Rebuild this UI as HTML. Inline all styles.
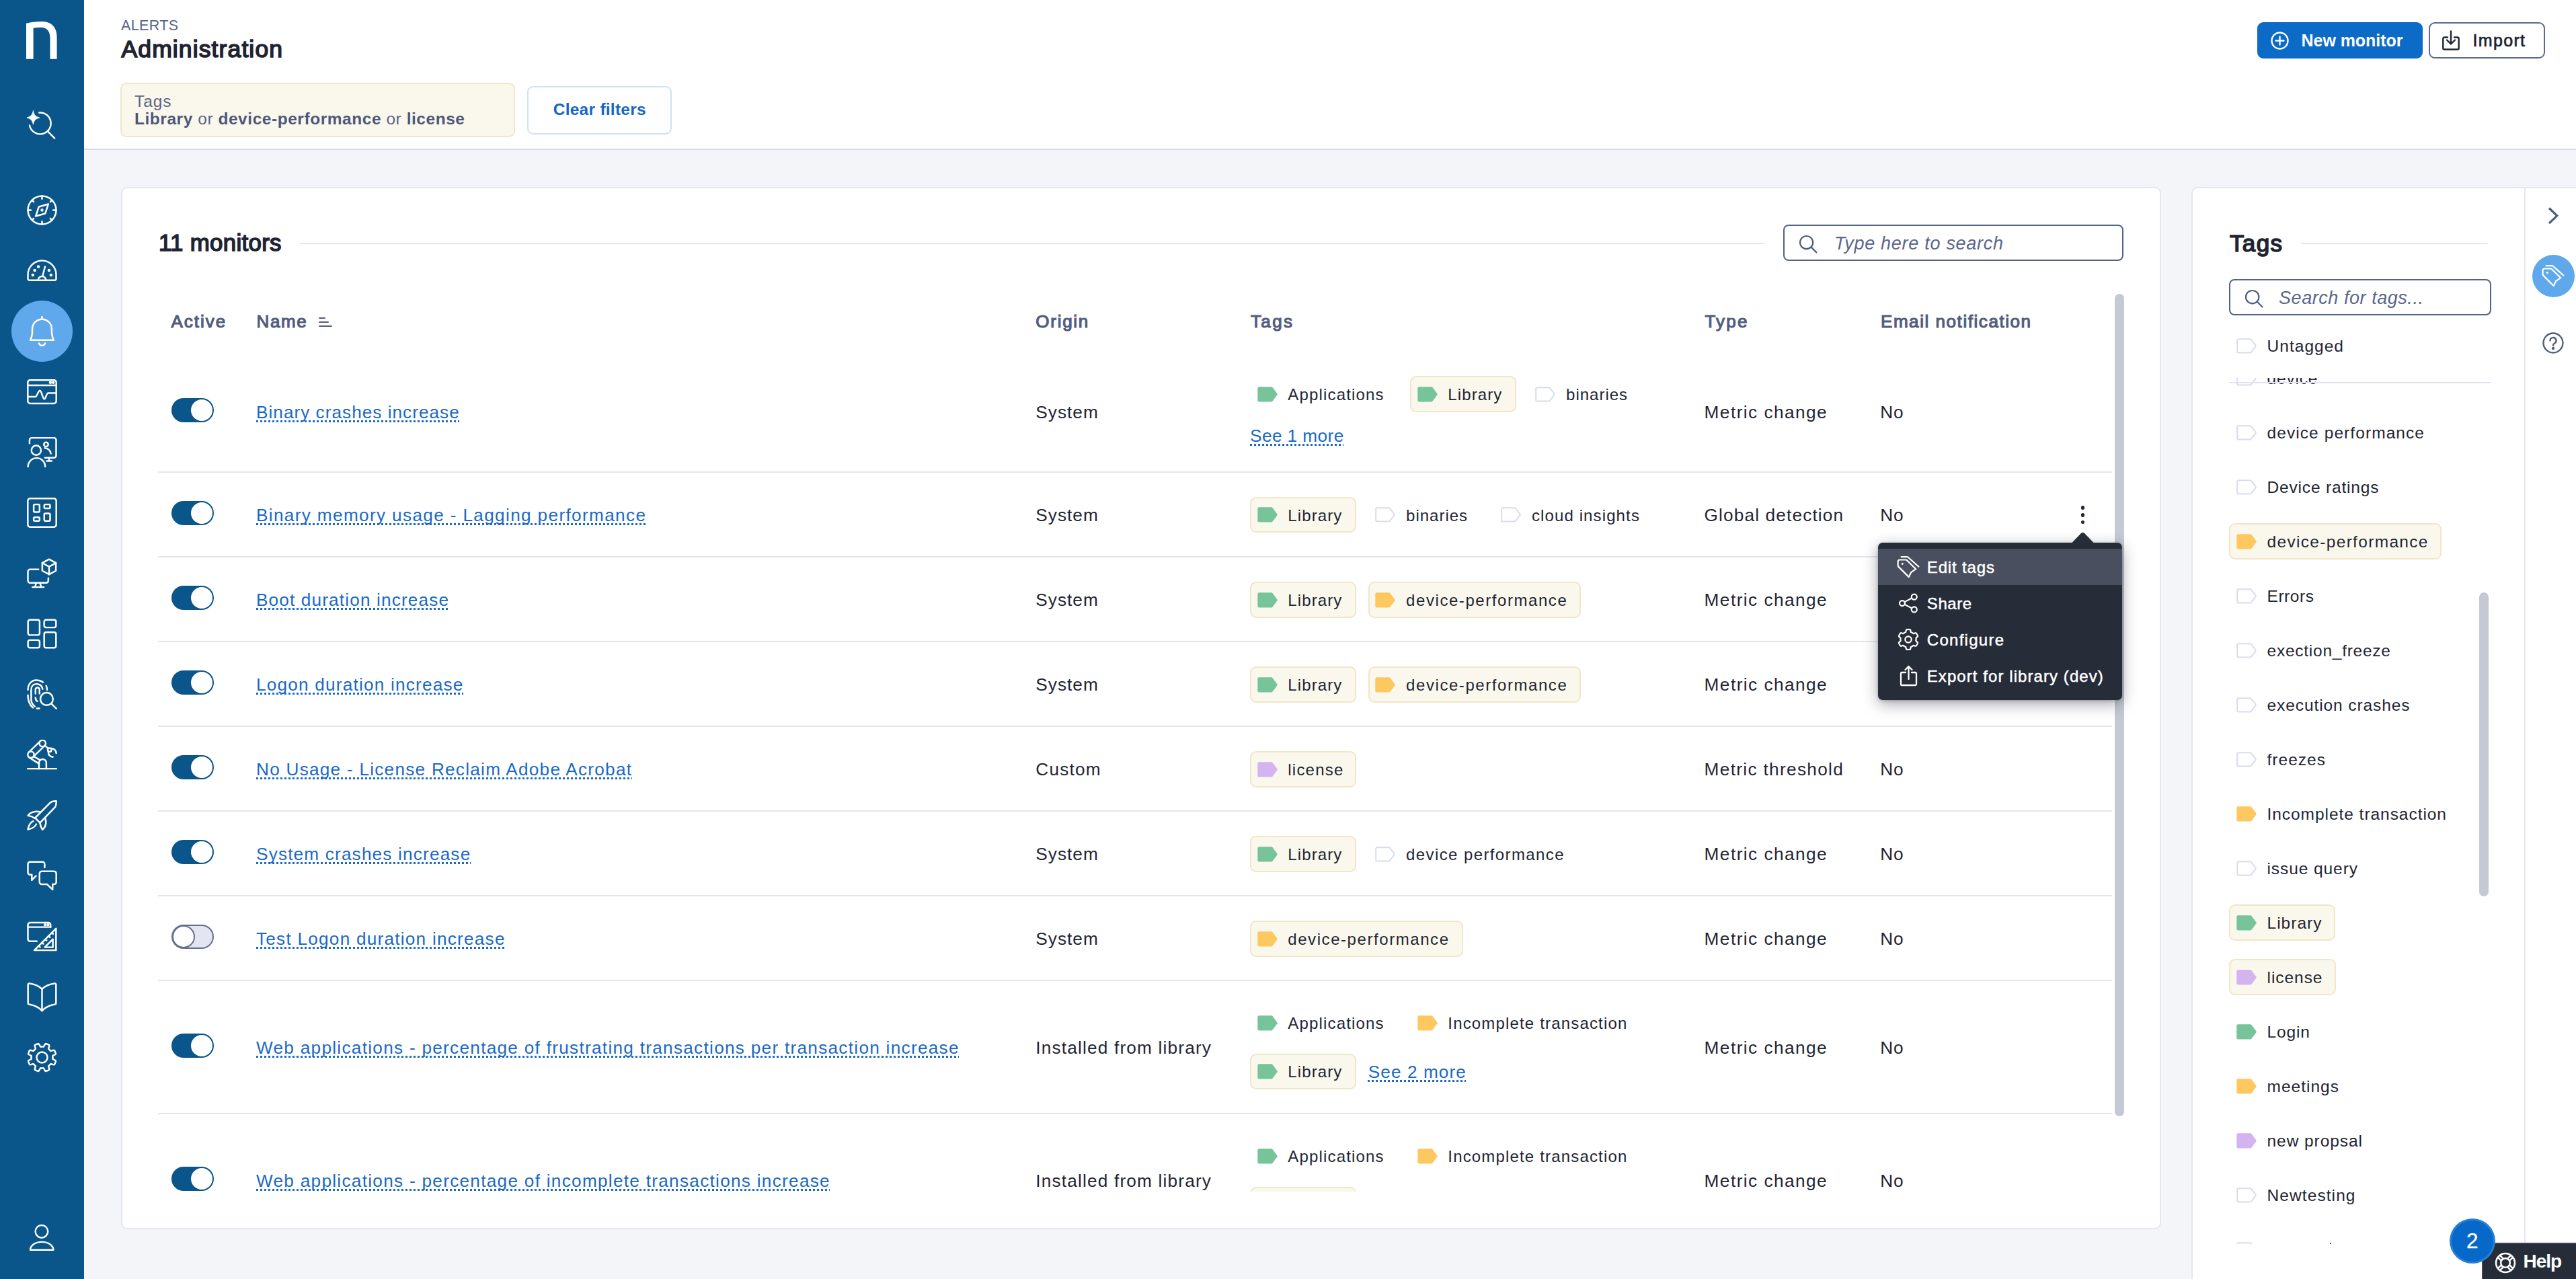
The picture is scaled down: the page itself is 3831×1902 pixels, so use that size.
<!DOCTYPE html>
<html><head><meta charset="utf-8"><title>Alerts Administration</title><style>
*{margin:0;padding:0;box-sizing:border-box}
html,body{width:3831px;height:1902px;overflow:hidden;background:#f4f5f9;font-family:"Liberation Sans", sans-serif;}
.t{position:absolute;white-space:pre;}
.u{text-decoration:underline dotted;text-decoration-thickness:2.8px;text-underline-offset:3px;text-decoration-skip-ink:none}
.chip{position:absolute;height:53.500px;border:2px solid #f3e5c7;background:#faf8ec;border-radius:9px}
.sep{position:absolute;left:235px;width:2906px;height:2px;background:#e3e6f1}
.tog{position:absolute;left:255px;width:63px;height:36px;border-radius:18px;background:#0a558a}
.tog i{position:absolute;right:2px;top:2px;width:32px;height:32px;border-radius:50%;background:#fff}
.tog.off{background:#e3e5f0;border:2px solid #63718f}
.tog.off i{left:-1px;right:auto;top:-1px;width:34px;height:34px;border:2px solid #63718f}
</style></head>
<body>
<div style="position:absolute;left:0px;top:0px;width:125px;height:1902px;background:#0a558a"></div>
<svg style="position:absolute;left:30px;top:25px" width="70" height="70" viewBox="30 25 70 70"><path fill="#fff" d="M39 87.800V34.700C46 32.900 54 31.900 62 31.900c14 0 22.600 8.100 22.600 22.600V87.800H74.500V57C74.500 46 69.500 40.700 60.500 40.700c-3.700 0-7.500.4-10.900 1.100V87.800z"/></svg>
<svg style="position:absolute;left:40.0px;top:163.5px" width="44" height="44" viewBox="0 0 24 24" fill="none" stroke="#fff" stroke-width="1.32" stroke-linecap="round" stroke-linejoin="round" ><path d="M9.99 1.93A8.7 8.7 0 1 1 2.21 12.26"/><path d="M17.1 17.2l5.4 5.5"/><path d="M5.1 .4c.6 3.2 1.7 4.6 5.200 5.600-3.500 1-4.600 2.400-5.200 5.600-.6-3.200-1.700-4.600-5.200-5.600 3.500-1 4.600-2.400 5.200-5.600z" fill="#fff" stroke-width=".4"/></svg>
<div style="position:absolute;left:16.5px;top:446.5px;width:91px;height:91px;border-radius:50%;background:#5fa8ec"></div>
<svg style="position:absolute;left:39.5px;top:289.5px" width="45" height="45" viewBox="0 0 24 24" fill="none" stroke="#fff" stroke-width="1.32" stroke-linecap="round" stroke-linejoin="round" ><circle cx="12" cy="12" r="11.2"/><path d="M12 .8v2.300M12 20.900v2.300M.8 12h2.300M20.900 12h2.300M4.100 4.100l1.300 1.300M18.600 18.600l1.300 1.300M4.100 19.900l1.300-1.300M18.600 5.400l1.300-1.300"/><path d="M17 7.200l-2.500 7.500-7.500 2.100 2.500-7.500z"/><circle cx="12" cy="12" r=".55" fill="#fff"/></svg>
<svg style="position:absolute;left:39.5px;top:379.5px" width="45" height="45" viewBox="0 0 24 24" fill="none" stroke="#fff" stroke-width="1.32" stroke-linecap="round" stroke-linejoin="round" ><path d="M.8 18.400v-3.200a11.200 11.200 0 0 1 22.400 0v3.200a1.200 1.200 0 0 1-1.200 1.200H2a1.200 1.200 0 0 1-1.200-1.200z"/><path d="M12.400 16.300l2-7.500"/><path d="M8.900 19.600a3.100 3.100 0 0 1 6.200 0"/><circle cx="4.700" cy="15.500" r=".55" fill="#fff"/><circle cx="6.200" cy="11.700" r=".55" fill="#fff"/><circle cx="9.100" cy="8.750" r=".55" fill="#fff"/><circle cx="17.550" cy="11.700" r=".55" fill="#fff"/><circle cx="19.100" cy="15.500" r=".55" fill="#fff"/></svg>
<svg style="position:absolute;left:39.5px;top:469.5px" width="45" height="45" viewBox="0 0 24 24" fill="none" stroke="#fff" stroke-width="1.32" stroke-linecap="round" stroke-linejoin="round" ><path d="M12 .5v1.900"/><path d="M2.700 19.100c1.200-2.200 1.600-4.600 1.600-7.600v-1.300a7.700 7.700 0 0 1 15.400 0v1.300c0 3 .4 5.400 1.600 7.600z"/><path d="M9.600 21.600a2.500 2.500 0 0 0 4.800 0"/></svg>
<svg style="position:absolute;left:39.5px;top:559.5px" width="45" height="45" viewBox="0 0 24 24" fill="none" stroke="#fff" stroke-width="1.32" stroke-linecap="round" stroke-linejoin="round" ><rect x=".7" y="2.800" width="22.600" height="18.500" rx="1.800"/><path d="M.7 6.900h22.600"/><path d="M.9 16.050h5.900c1.200 0 2.200-5 3.500-5s2.300 6.800 3.500 6.800 1.600-4.750 3.100-4.750h6.200"/><circle cx="18.600" cy="4.700" r=".55" fill="#fff"/><circle cx="20.900" cy="4.700" r=".55" fill="#fff"/></svg>
<svg style="position:absolute;left:39.5px;top:649.5px" width="45" height="45" viewBox="0 0 24 24" fill="none" stroke="#fff" stroke-width="1.32" stroke-linecap="round" stroke-linejoin="round" ><path d="M2.100 5V2.400A1.800 1.800 0 0 1 3.900.6h17.500a1.800 1.800 0 0 1 1.800 1.800v12.200a1.800 1.800 0 0 1-1.800 1.800h-7.100"/><path d="M17.600 16.400v2.500M15.700 18.900h4"/><circle cx="7.400" cy="10.500" r="3.800"/><path d="M.9 23.400a6.800 6.800 0 0 1 13.600 0"/><circle cx="15.200" cy="5.800" r="1.700"/><path d="M14.200 8.700a5 5 0 0 1 4.800 4.400"/></svg>
<svg style="position:absolute;left:39.5px;top:739.5px" width="45" height="45" viewBox="0 0 24 24" fill="none" stroke="#fff" stroke-width="1.32" stroke-linecap="round" stroke-linejoin="round" ><rect x=".7" y=".7" width="22.600" height="22.600" rx="1.800"/><rect x="5.400" y="5.400" width="4.650" height="6.050" rx=".9"/><rect x="5.400" y="15.650" width="4.650" height="2.900" rx=".9"/><rect x="13.750" y="5.400" width="4.650" height="3.100" rx=".9"/><rect x="13.750" y="12.500" width="4.650" height="6.050" rx=".9"/></svg>
<svg style="position:absolute;left:39.5px;top:829.5px" width="45" height="45" viewBox="0 0 24 24" fill="none" stroke="#fff" stroke-width="1.32" stroke-linecap="round" stroke-linejoin="round" ><path d="M9.200 8.900H2.600a1.800 1.800 0 0 0-1.800 1.800v7.100a1.800 1.800 0 0 0 1.800 1.800h12.600a1.800 1.800 0 0 0 1.800-1.800v-2"/><path d="M7.400 19.800l-1 3.200M10.400 19.800l1 3.200M4.400 23h9"/><path d="M17.600.9L23 3.800v6.200l-5.400 2.900-5.400-2.900V3.800z"/><path d="M12.200 3.800l5.400 3 5.400-3M17.600 6.800v6.100"/></svg>
<svg style="position:absolute;left:39.5px;top:919.5px" width="45" height="45" viewBox="0 0 24 24" fill="none" stroke="#fff" stroke-width="1.32" stroke-linecap="round" stroke-linejoin="round" ><rect x=".9" y=".9" width="9.200" height="12.100" rx="1.500"/><rect x=".9" y="17" width="9.200" height="6.100" rx="1.500"/><rect x="13.700" y=".9" width="9.400" height="6.100" rx="1.500"/><rect x="13.700" y="10.800" width="9.400" height="12.300" rx="1.500"/></svg>
<svg style="position:absolute;left:39.5px;top:1009.5px" width="45" height="45" viewBox="0 0 24 24" fill="none" stroke="#fff" stroke-width="1.32" stroke-linecap="round" stroke-linejoin="round" ><circle cx="15.700" cy="15.700" r="5"/><path d="M19.500 19.500l3.800 3.800"/><path d="M.8 8.400C.8 4 3.600.8 7.400.8c2 0 3.800.5 5.400 1.600M15.300 5.200c.5 1 .7 2 .7 3.200M.8 12.600c0 4 1.400 7.800 4 10M7.900 23.200h2M3.400 16.800V8.600c0-3 1.700-4.800 4.100-4.800 2.400 0 4.400 1.500 5 4M3.400 16.800c.3 2 1.300 3.600 2.800 4.800M6.800 11.500V8.300a1.600 1.600 0 0 1 3.200 0v3.200M6.800 14.500c0 1.400.5 2.400 1.400 3"/></svg>
<svg style="position:absolute;left:39.5px;top:1099.5px" width="45" height="45" viewBox="0 0 24 24" fill="none" stroke="#fff" stroke-width="1.32" stroke-linecap="round" stroke-linejoin="round" ><path d="M.6 23h22.800"/><path d="M9.600 23v-4.600a2.900 2.900 0 0 1 5.800 0V23"/><circle cx="3.200" cy="11.900" r="2.500"/><circle cx="12.400" cy="2.900" r="2.500"/><path d="M1.430 10.080l9.170-8.980M4.930 13.660l9.170-8.960M1.600 14l7.900 5M5.300 13.100l5.200 3.100"/><path d="M14.400 4.700l2.400 2.200"/><circle cx="18" cy="8.100" r="1.450"/><path d="M19.600 6.900c2 .2 3.400 1.600 3.700 3.800M17 10c0 2 1.400 3.400 3.600 3.700"/></svg>
<svg style="position:absolute;left:39.5px;top:1189.5px" width="45" height="45" viewBox="0 0 24 24" fill="none" stroke="#fff" stroke-width="1.32" stroke-linecap="round" stroke-linejoin="round" ><path d="M23.300.7C21.500.6 20 .9 18.800 1.700L6.500 14l3.900 3.900L22.400 5.400c.7-1.200 1-2.800.9-4.700z"/><path d="M10.500 9.300C7 8.400 2.500 9.500.8 12.200c2 .3 3.800.9 5.300 2.100"/><path d="M14.700 14.700c.9 3.200.2 6.800-2.400 8.600-.9-1.400-1.600-3.200-1.900-5"/><path d="M5 16.600C2.600 17.600 1.400 20.200.8 23.200c3-.6 5.600-1.800 6.600-4.200"/></svg>
<svg style="position:absolute;left:39.5px;top:1279.5px" width="45" height="45" viewBox="0 0 24 24" fill="none" stroke="#fff" stroke-width="1.32" stroke-linecap="round" stroke-linejoin="round" ><path d="M14.100 5.300V2.700a1.800 1.800 0 0 0-1.800-1.800H2.600A1.800 1.800 0 0 0 .8 2.700v6.600a1.800 1.800 0 0 0 1.800 1.800h1.300v4.300l3.300-3.300"/><path d="M11.800 8.400h9.700a1.800 1.800 0 0 1 1.800 1.800v6.700a1.800 1.800 0 0 1-1.800 1.800h-1.100v4.200L16 18.700h-4.200a1.800 1.800 0 0 1-1.800-1.800v-6.700a1.800 1.800 0 0 1 1.800-1.800z"/></svg>
<svg style="position:absolute;left:39.5px;top:1369.5px" width="45" height="45" viewBox="0 0 24 24" fill="none" stroke="#fff" stroke-width="1.32" stroke-linecap="round" stroke-linejoin="round" ><path d="M7.900 15.900H2.600a1.800 1.800 0 0 1-1.800-1.800V2.900a1.800 1.800 0 0 1 1.800-1.800H17a1.800 1.800 0 0 1 1.800 1.800v1.600"/><path d="M.8 4.600h18"/><circle cx="14.450" cy="2.800" r=".5" fill="#fff"/><circle cx="16.750" cy="2.800" r=".5" fill="#fff"/><path d="M23.100 5.800V23H5.900z"/><path d="M20.600 14.200v6.400h-6.400z"/><path d="M9.400 19.500l1 1M12 16.900l1 1M14.600 14.300l1 1M17.200 11.700l1 1M19.800 9.100l1 1"/></svg>
<svg style="position:absolute;left:39.5px;top:1459.5px" width="45" height="45" viewBox="0 0 24 24" fill="none" stroke="#fff" stroke-width="1.32" stroke-linecap="round" stroke-linejoin="round" ><path d="M12 5.800C9.500 3.200 6 1.800 2 1.300a1 1 0 0 0-1.100 1v14.600a1 1 0 0 0 .8 1C5.800 18.600 9.300 20.200 12 23c2.700-2.800 6.200-4.400 10.300-5.100a1 1 0 0 0 .8-1V2.300a1 1 0 0 0-1.100-1C18 1.800 14.500 3.200 12 5.800z"/><path d="M12 5.800V23"/></svg>
<svg style="position:absolute;left:39.5px;top:1549.5px" width="45" height="45" viewBox="0 0 24 24" fill="none" stroke="#fff" stroke-width="1.32" stroke-linecap="round" stroke-linejoin="round" ><circle cx="12" cy="12" r="4.300"/><path d="M12.00 3.50 L12.22 3.50 L12.44 3.51 L12.67 3.53 L12.89 3.55 L13.11 3.57 L13.38 3.30 L13.73 2.67 L14.14 1.91 L14.57 1.31 L14.92 1.09 L15.21 1.17 L15.49 1.25 L15.77 1.35 L16.05 1.45 L16.32 1.56 L16.60 1.68 L16.86 1.80 L17.13 1.93 L17.39 2.07 L17.65 2.22 L17.74 2.63 L17.62 3.35 L17.37 4.18 L17.18 4.87 L17.18 5.25 L17.35 5.39 L17.52 5.54 L17.69 5.68 L17.85 5.83 L18.01 5.99 L18.17 6.15 L18.32 6.31 L18.46 6.48 L18.61 6.65 L18.75 6.82 L19.13 6.82 L19.82 6.63 L20.65 6.38 L21.37 6.26 L21.78 6.35 L21.93 6.61 L22.07 6.87 L22.20 7.14 L22.32 7.40 L22.44 7.68 L22.55 7.95 L22.65 8.23 L22.75 8.51 L22.83 8.79 L22.91 9.08 L22.69 9.43 L22.09 9.86 L21.33 10.27 L20.70 10.62 L20.43 10.89 L20.45 11.11 L20.47 11.33 L20.49 11.56 L20.50 11.78 L20.50 12.00 L20.50 12.22 L20.49 12.44 L20.47 12.67 L20.45 12.89 L20.43 13.11 L20.70 13.38 L21.33 13.73 L22.09 14.14 L22.69 14.57 L22.91 14.92 L22.83 15.21 L22.75 15.49 L22.65 15.77 L22.55 16.05 L22.44 16.32 L22.32 16.60 L22.20 16.86 L22.07 17.13 L21.93 17.39 L21.78 17.65 L21.37 17.74 L20.65 17.62 L19.82 17.37 L19.13 17.18 L18.75 17.18 L18.61 17.35 L18.46 17.52 L18.32 17.69 L18.17 17.85 L18.01 18.01 L17.85 18.17 L17.69 18.32 L17.52 18.46 L17.35 18.61 L17.18 18.75 L17.18 19.13 L17.37 19.82 L17.62 20.65 L17.74 21.37 L17.65 21.78 L17.39 21.93 L17.13 22.07 L16.86 22.20 L16.60 22.32 L16.32 22.44 L16.05 22.55 L15.77 22.65 L15.49 22.75 L15.21 22.83 L14.92 22.91 L14.57 22.69 L14.14 22.09 L13.73 21.33 L13.38 20.70 L13.11 20.43 L12.89 20.45 L12.67 20.47 L12.44 20.49 L12.22 20.50 L12.00 20.50 L11.78 20.50 L11.56 20.49 L11.33 20.47 L11.11 20.45 L10.89 20.43 L10.62 20.70 L10.27 21.33 L9.86 22.09 L9.43 22.69 L9.08 22.91 L8.79 22.83 L8.51 22.75 L8.23 22.65 L7.95 22.55 L7.68 22.44 L7.40 22.32 L7.14 22.20 L6.87 22.07 L6.61 21.93 L6.35 21.78 L6.26 21.37 L6.38 20.65 L6.63 19.82 L6.82 19.13 L6.82 18.75 L6.65 18.61 L6.48 18.46 L6.31 18.32 L6.15 18.17 L5.99 18.01 L5.83 17.85 L5.68 17.69 L5.54 17.52 L5.39 17.35 L5.25 17.18 L4.87 17.18 L4.18 17.37 L3.35 17.62 L2.63 17.74 L2.22 17.65 L2.07 17.39 L1.93 17.13 L1.80 16.86 L1.68 16.60 L1.56 16.32 L1.45 16.05 L1.35 15.77 L1.25 15.49 L1.17 15.21 L1.09 14.92 L1.31 14.57 L1.91 14.14 L2.67 13.73 L3.30 13.38 L3.57 13.11 L3.55 12.89 L3.53 12.67 L3.51 12.44 L3.50 12.22 L3.50 12.00 L3.50 11.78 L3.51 11.56 L3.53 11.33 L3.55 11.11 L3.57 10.89 L3.30 10.62 L2.67 10.27 L1.91 9.86 L1.31 9.43 L1.09 9.08 L1.17 8.79 L1.25 8.51 L1.35 8.23 L1.45 7.95 L1.56 7.68 L1.68 7.40 L1.80 7.14 L1.93 6.87 L2.07 6.61 L2.22 6.35 L2.63 6.26 L3.35 6.38 L4.18 6.63 L4.87 6.82 L5.25 6.82 L5.39 6.65 L5.54 6.48 L5.68 6.31 L5.83 6.15 L5.99 5.99 L6.15 5.83 L6.31 5.68 L6.48 5.54 L6.65 5.39 L6.82 5.25 L6.82 4.87 L6.63 4.18 L6.38 3.35 L6.26 2.63 L6.35 2.22 L6.61 2.07 L6.87 1.93 L7.14 1.80 L7.40 1.68 L7.68 1.56 L7.95 1.45 L8.23 1.35 L8.51 1.25 L8.79 1.17 L9.08 1.09 L9.43 1.31 L9.86 1.91 L10.27 2.67 L10.62 3.30 L10.89 3.57 L11.11 3.55 L11.33 3.53 L11.56 3.51 L11.78 3.50z"/></svg>
<svg style="position:absolute;left:42.0px;top:1821.0px" width="40" height="40" viewBox="0 0 24 24" fill="none" stroke="#fff" stroke-width="1.45" stroke-linecap="round" stroke-linejoin="round" ><circle cx="11.950" cy="6.200" r="5.600"/><path d="M1.800 22.600a10.300 7.100 0 0 1 20.600 0z"/></svg>
<div style="position:absolute;left:125px;top:0px;width:3706px;height:222px;background:#fff"></div>
<div style="position:absolute;left:125px;top:221.3px;width:3706px;height:2.2px;background:#d6dae4"></div>
<div style="position:absolute;left:179px;top:123px;width:586.5px;height:80.5px;border:2px solid #f3e5c7;background:#faf8ec;border-radius:9px"></div>
<div style="position:absolute;left:784.4px;top:128px;width:214.2px;height:71.5px;border:2px solid #cfe2f6;background:#fff;border-radius:9px"></div>
<div style="position:absolute;left:3357px;top:33px;width:245.5px;height:54px;background:#0d6bc8;border-radius:9px"></div>
<svg style="position:absolute;left:3376.5px;top:46.5px" width="27" height="27" viewBox="0 0 27 27" fill="none" stroke="#fff" stroke-width="2.4" stroke-linecap="round" stroke-linejoin="round" ><circle cx="13.500" cy="13.500" r="12"/><path d="M13.500 7.500v12M7.500 13.500h12"/></svg>
<div style="position:absolute;left:3612px;top:33px;width:173px;height:54px;border:2px solid #5a6a8c;background:#fff;border-radius:9px"></div>
<svg style="position:absolute;left:3632px;top:45px" width="26" height="30" viewBox="0 0 26 30" fill="none" stroke="#1f2430" stroke-width="2.4" stroke-linecap="round" stroke-linejoin="round" ><path d="M8 10.500H3.300A2 2 0 0 0 1.300 12.500v14a2 2 0 0 0 2 2h19.400a2 2 0 0 0 2-2v-14a2 2 0 0 0-2-2H18"/><path d="M13 1.500v19M7 14.500l6 6 6-6"/></svg>
<div style="position:absolute;left:179.5px;top:278px;width:3034.5px;height:1549.5px;background:#fff;border:2px solid #e3e6f1;border-radius:9px"></div>
<div style="position:absolute;left:446px;top:360.5px;width:2179px;height:2px;background:#e3e6f1"></div>
<div style="position:absolute;left:2652px;top:334px;width:505.5px;height:54px;border:2px solid #52648a;border-radius:8px;background:#fff"></div>
<svg style="position:absolute;left:2673.0px;top:347.0px" width="43.2" height="43.2" viewBox="0 0 43.2 43.2" fill="none" stroke="#4e5d7e" stroke-width="2.2" stroke-linecap="round"><circle cx="13.6" cy="13.6" r="9.6"/><path d="M20.88816 20.88816L28.38816 28.38816"/></svg>
<div style="position:absolute;left:473.8px;top:471.5px;width:10.5px;height:2.2px;background:#525d7f;border-radius:1px"></div>
<div style="position:absolute;left:473.8px;top:477.5px;width:15.5px;height:2.2px;background:#525d7f;border-radius:1px"></div>
<div style="position:absolute;left:473.8px;top:483.5px;width:20.5px;height:2.2px;background:#525d7f;border-radius:1px"></div>
<div class="t" style="left:180px;top:27.50px;font-size:21.5px;line-height:21.5px;color:#5b6486;letter-spacing:0.35px;font-weight:500;">ALERTS</div>
<div class="t" style="left:180.5px;top:56.15px;font-size:35.5px;line-height:35.5px;color:#1f2430;letter-spacing:1.12px;-webkit-text-stroke:1.60px #1f2430;">Administration</div>
<div class="t" style="left:200px;top:138.56px;font-size:24.5px;line-height:24.5px;color:#5d6685;letter-spacing:0.911px;">Tags</div>
<div class="t" style="left:200px;top:165.26px;font-size:24.5px;line-height:24.5px;color:#5a6484;letter-spacing:0.543px;"><b style="color:#4d587b">Library</b> or <b style="color:#4d587b">device-performance</b> or <b style="color:#4d587b">license</b></div>
<div class="t" style="left:822.7px;top:151.26px;font-size:24.5px;line-height:24.5px;color:#1467c4;letter-spacing:0.266px;font-weight:700;">Clear filters</div>
<div class="t" style="left:3422.5px;top:47.84px;font-size:25px;line-height:25px;color:#fff;letter-spacing:-0.041px;font-weight:700;">New monitor</div>
<div class="t" style="left:3677.5px;top:47.84px;font-size:25px;line-height:25px;color:#1f2430;letter-spacing:1.328px;-webkit-text-stroke:.7px #1f2430;">Import</div>
<div class="t" style="left:236px;top:344.34px;font-size:34.8px;line-height:34.8px;color:#1f2430;letter-spacing:0.328px;-webkit-text-stroke:1.57px #1f2430;">11 monitors</div>
<div class="t" style="left:2728px;top:348.94px;font-size:27px;line-height:27px;color:#5a668a;letter-spacing:0.715px;font-style:italic;">Type here to search</div>
<div class="t" style="left:254.4px;top:464.79px;font-size:26px;line-height:26px;color:#525d7f;letter-spacing:1.997px;-webkit-text-stroke:1.14px #525d7f;">Active</div>
<div class="t" style="left:381.6px;top:464.79px;font-size:26px;line-height:26px;color:#525d7f;letter-spacing:1.547px;-webkit-text-stroke:1.14px #525d7f;">Name</div>
<div class="t" style="left:1540.3px;top:464.79px;font-size:26px;line-height:26px;color:#525d7f;letter-spacing:1.728px;-webkit-text-stroke:1.14px #525d7f;">Origin</div>
<div class="t" style="left:1860px;top:464.79px;font-size:26px;line-height:26px;color:#525d7f;letter-spacing:2.359px;-webkit-text-stroke:1.14px #525d7f;">Tags</div>
<div class="t" style="left:2535.4px;top:464.79px;font-size:26px;line-height:26px;color:#525d7f;letter-spacing:2.208px;-webkit-text-stroke:1.14px #525d7f;">Type</div>
<div class="t" style="left:2797px;top:464.79px;font-size:26px;line-height:26px;color:#525d7f;letter-spacing:1.556px;-webkit-text-stroke:1.14px #525d7f;">Email notification</div>
<div style="position:absolute;left:181.500px;top:432px;width:3031px;height:1340px;overflow:hidden"><div style="position:absolute;left:-181.500px;top:-432px;width:3831px;height:1902px">
<div class="tog" style="top:591.6px"><i></i></div>
<div class="tog" style="top:745.1px"><i></i></div>
<div class="tog" style="top:871.1px"><i></i></div>
<div class="tog" style="top:997.1px"><i></i></div>
<div class="tog" style="top:1123.1px"><i></i></div>
<div class="tog" style="top:1249.1px"><i></i></div>
<div class="tog off" style="top:1375.1px"><i></i></div>
<div class="tog" style="top:1536.6px"><i></i></div>
<div class="tog" style="top:1734.6px"><i></i></div>
<div class="sep" style="top:701px"></div>
<div class="sep" style="top:827px"></div>
<div class="sep" style="top:953px"></div>
<div class="sep" style="top:1079px"></div>
<div class="sep" style="top:1205px"></div>
<div class="sep" style="top:1331px"></div>
<div class="sep" style="top:1457px"></div>
<div class="sep" style="top:1654.5px"></div>
<svg style="position:absolute;left:1869.5px;top:574.5px" width="30" height="23" viewBox="0 0 30 23"><path d="M2.5 0.3H20.6a2.4 2.4 0 0 1 2 1L29.3 10.3a2 2 0 0 1 0 2.2L22.6 21.5a2.4 2.4 0 0 1-2 1H2.5A2.2 2.2 0 0 1 .3 20.3V2.5A2.2 2.2 0 0 1 2.5.3Z" fill="#77c39a"/></svg>
<div class="chip" style="left:2097.0px;top:559px;width:157.8px"></div>
<svg style="position:absolute;left:2107.5px;top:574.5px" width="30" height="23" viewBox="0 0 30 23"><path d="M2.5 0.3H20.6a2.4 2.4 0 0 1 2 1L29.3 10.3a2 2 0 0 1 0 2.2L22.6 21.5a2.4 2.4 0 0 1-2 1H2.5A2.2 2.2 0 0 1 .3 20.3V2.5A2.2 2.2 0 0 1 2.5.3Z" fill="#77c39a"/></svg>
<svg style="position:absolute;left:2283.3px;top:574.5px" width="30" height="23" viewBox="0 0 30 23"><path d="M3 1.3H20.3a2 2 0 0 1 1.7.9L28.4 10.4a1.8 1.8 0 0 1 0 2L22 20.6a2 2 0 0 1-1.7.9H3A1.8 1.8 0 0 1 1.2 19.7V3.1A1.8 1.8 0 0 1 3 1.3Z" fill="#fff" stroke="#d9dcee" stroke-width="2"/></svg>
<div class="chip" style="left:1859px;top:738.8px;width:157.8px"></div>
<svg style="position:absolute;left:1869.5px;top:754.3px" width="30" height="23" viewBox="0 0 30 23"><path d="M2.5 0.3H20.6a2.4 2.4 0 0 1 2 1L29.3 10.3a2 2 0 0 1 0 2.2L22.6 21.5a2.4 2.4 0 0 1-2 1H2.5A2.2 2.2 0 0 1 .3 20.3V2.5A2.2 2.2 0 0 1 2.5.3Z" fill="#77c39a"/></svg>
<svg style="position:absolute;left:2045.3px;top:754.3px" width="30" height="23" viewBox="0 0 30 23"><path d="M3 1.3H20.3a2 2 0 0 1 1.7.9L28.4 10.4a1.8 1.8 0 0 1 0 2L22 20.6a2 2 0 0 1-1.7.9H3A1.8 1.8 0 0 1 1.2 19.7V3.1A1.8 1.8 0 0 1 3 1.3Z" fill="#fff" stroke="#d9dcee" stroke-width="2"/></svg>
<svg style="position:absolute;left:2232.1px;top:754.3px" width="30" height="23" viewBox="0 0 30 23"><path d="M3 1.3H20.3a2 2 0 0 1 1.7.9L28.4 10.4a1.8 1.8 0 0 1 0 2L22 20.6a2 2 0 0 1-1.7.9H3A1.8 1.8 0 0 1 1.2 19.7V3.1A1.8 1.8 0 0 1 3 1.3Z" fill="#fff" stroke="#d9dcee" stroke-width="2"/></svg>
<div class="chip" style="left:1859px;top:865px;width:157.8px"></div>
<svg style="position:absolute;left:1869.5px;top:880.5px" width="30" height="23" viewBox="0 0 30 23"><path d="M2.5 0.3H20.6a2.4 2.4 0 0 1 2 1L29.3 10.3a2 2 0 0 1 0 2.2L22.6 21.5a2.4 2.4 0 0 1-2 1H2.5A2.2 2.2 0 0 1 .3 20.3V2.5A2.2 2.2 0 0 1 2.5.3Z" fill="#77c39a"/></svg>
<div class="chip" style="left:2034.8px;top:865px;width:316.5px"></div>
<svg style="position:absolute;left:2045.3px;top:880.5px" width="30" height="23" viewBox="0 0 30 23"><path d="M2.5 0.3H20.6a2.4 2.4 0 0 1 2 1L29.3 10.3a2 2 0 0 1 0 2.2L22.6 21.5a2.4 2.4 0 0 1-2 1H2.5A2.2 2.2 0 0 1 .3 20.3V2.5A2.2 2.2 0 0 1 2.5.3Z" fill="#fdc860"/></svg>
<div class="chip" style="left:1859px;top:991px;width:157.8px"></div>
<svg style="position:absolute;left:1869.5px;top:1006.5px" width="30" height="23" viewBox="0 0 30 23"><path d="M2.5 0.3H20.6a2.4 2.4 0 0 1 2 1L29.3 10.3a2 2 0 0 1 0 2.2L22.6 21.5a2.4 2.4 0 0 1-2 1H2.5A2.2 2.2 0 0 1 .3 20.3V2.5A2.2 2.2 0 0 1 2.5.3Z" fill="#77c39a"/></svg>
<div class="chip" style="left:2034.8px;top:991px;width:316.5px"></div>
<svg style="position:absolute;left:2045.3px;top:1006.5px" width="30" height="23" viewBox="0 0 30 23"><path d="M2.5 0.3H20.6a2.4 2.4 0 0 1 2 1L29.3 10.3a2 2 0 0 1 0 2.2L22.6 21.5a2.4 2.4 0 0 1-2 1H2.5A2.2 2.2 0 0 1 .3 20.3V2.5A2.2 2.2 0 0 1 2.5.3Z" fill="#fdc860"/></svg>
<div class="chip" style="left:1859px;top:1117px;width:158.1px"></div>
<svg style="position:absolute;left:1869.5px;top:1132.5px" width="30" height="23" viewBox="0 0 30 23"><path d="M2.5 0.3H20.6a2.4 2.4 0 0 1 2 1L29.3 10.3a2 2 0 0 1 0 2.2L22.6 21.5a2.4 2.4 0 0 1-2 1H2.5A2.2 2.2 0 0 1 .3 20.3V2.5A2.2 2.2 0 0 1 2.5.3Z" fill="#d4b3f1"/></svg>
<div class="chip" style="left:1859px;top:1243px;width:157.8px"></div>
<svg style="position:absolute;left:1869.5px;top:1258.5px" width="30" height="23" viewBox="0 0 30 23"><path d="M2.5 0.3H20.6a2.4 2.4 0 0 1 2 1L29.3 10.3a2 2 0 0 1 0 2.2L22.6 21.5a2.4 2.4 0 0 1-2 1H2.5A2.2 2.2 0 0 1 .3 20.3V2.5A2.2 2.2 0 0 1 2.5.3Z" fill="#77c39a"/></svg>
<svg style="position:absolute;left:2045.3px;top:1258.5px" width="30" height="23" viewBox="0 0 30 23"><path d="M3 1.3H20.3a2 2 0 0 1 1.7.9L28.4 10.4a1.8 1.8 0 0 1 0 2L22 20.6a2 2 0 0 1-1.7.9H3A1.8 1.8 0 0 1 1.2 19.7V3.1A1.8 1.8 0 0 1 3 1.3Z" fill="#fff" stroke="#d9dcee" stroke-width="2"/></svg>
<div class="chip" style="left:1859px;top:1369px;width:316.5px"></div>
<svg style="position:absolute;left:1869.5px;top:1384.5px" width="30" height="23" viewBox="0 0 30 23"><path d="M2.5 0.3H20.6a2.4 2.4 0 0 1 2 1L29.3 10.3a2 2 0 0 1 0 2.2L22.6 21.5a2.4 2.4 0 0 1-2 1H2.5A2.2 2.2 0 0 1 .3 20.3V2.5A2.2 2.2 0 0 1 2.5.3Z" fill="#fdc860"/></svg>
<svg style="position:absolute;left:1869.5px;top:1510.0px" width="30" height="23" viewBox="0 0 30 23"><path d="M2.5 0.3H20.6a2.4 2.4 0 0 1 2 1L29.3 10.3a2 2 0 0 1 0 2.2L22.6 21.5a2.4 2.4 0 0 1-2 1H2.5A2.2 2.2 0 0 1 .3 20.3V2.5A2.2 2.2 0 0 1 2.5.3Z" fill="#77c39a"/></svg>
<svg style="position:absolute;left:2107.5px;top:1510.0px" width="30" height="23" viewBox="0 0 30 23"><path d="M2.5 0.3H20.6a2.4 2.4 0 0 1 2 1L29.3 10.3a2 2 0 0 1 0 2.2L22.6 21.5a2.4 2.4 0 0 1-2 1H2.5A2.2 2.2 0 0 1 .3 20.3V2.5A2.2 2.2 0 0 1 2.5.3Z" fill="#fdc860"/></svg>
<div class="chip" style="left:1859px;top:1566.5px;width:157.8px"></div>
<svg style="position:absolute;left:1869.5px;top:1582.0px" width="30" height="23" viewBox="0 0 30 23"><path d="M2.5 0.3H20.6a2.4 2.4 0 0 1 2 1L29.3 10.3a2 2 0 0 1 0 2.2L22.6 21.5a2.4 2.4 0 0 1-2 1H2.5A2.2 2.2 0 0 1 .3 20.3V2.5A2.2 2.2 0 0 1 2.5.3Z" fill="#77c39a"/></svg>
<svg style="position:absolute;left:1869.5px;top:1708.0px" width="30" height="23" viewBox="0 0 30 23"><path d="M2.5 0.3H20.6a2.4 2.4 0 0 1 2 1L29.3 10.3a2 2 0 0 1 0 2.2L22.6 21.5a2.4 2.4 0 0 1-2 1H2.5A2.2 2.2 0 0 1 .3 20.3V2.5A2.2 2.2 0 0 1 2.5.3Z" fill="#77c39a"/></svg>
<svg style="position:absolute;left:2107.5px;top:1708.0px" width="30" height="23" viewBox="0 0 30 23"><path d="M2.5 0.3H20.6a2.4 2.4 0 0 1 2 1L29.3 10.3a2 2 0 0 1 0 2.2L22.6 21.5a2.4 2.4 0 0 1-2 1H2.5A2.2 2.2 0 0 1 .3 20.3V2.5A2.2 2.2 0 0 1 2.5.3Z" fill="#fdc860"/></svg>
<div class="chip" style="left:1859px;top:1764.5px;width:157.8px"></div>
<svg style="position:absolute;left:1869.5px;top:1780.0px" width="30" height="23" viewBox="0 0 30 23"><path d="M2.5 0.3H20.6a2.4 2.4 0 0 1 2 1L29.3 10.3a2 2 0 0 1 0 2.2L22.6 21.5a2.4 2.4 0 0 1-2 1H2.5A2.2 2.2 0 0 1 .3 20.3V2.5A2.2 2.2 0 0 1 2.5.3Z" fill="#77c39a"/></svg>
<div class="t" style="left:381px;top:599.52px;font-size:26.2px;line-height:26.2px;color:#1a69c5;letter-spacing:1.015px;"><span class="u">Binary crashes increase</span></div>
<div class="t" style="left:1540.3px;top:599.52px;font-size:26.2px;line-height:26.2px;color:#1f2533;letter-spacing:1.018px;">System</div>
<div class="t" style="left:2534.6px;top:599.52px;font-size:26.2px;line-height:26.2px;color:#1f2533;letter-spacing:1.46px;">Metric change</div>
<div class="t" style="left:2796.3px;top:599.52px;font-size:26.2px;line-height:26.2px;color:#1f2533;letter-spacing:0.716px;">No</div>
<div class="t" style="left:381px;top:753.02px;font-size:26.2px;line-height:26.2px;color:#1a69c5;letter-spacing:1.338px;"><span class="u">Binary memory usage - Lagging performance</span></div>
<div class="t" style="left:1540.3px;top:753.02px;font-size:26.2px;line-height:26.2px;color:#1f2533;letter-spacing:1.018px;">System</div>
<div class="t" style="left:2534.6px;top:753.02px;font-size:26.2px;line-height:26.2px;color:#1f2533;letter-spacing:1.149px;">Global detection</div>
<div class="t" style="left:2796.3px;top:753.02px;font-size:26.2px;line-height:26.2px;color:#1f2533;letter-spacing:0.716px;">No</div>
<div class="t" style="left:381px;top:879.02px;font-size:26.2px;line-height:26.2px;color:#1a69c5;letter-spacing:1.141px;"><span class="u">Boot duration increase</span></div>
<div class="t" style="left:1540.3px;top:879.02px;font-size:26.2px;line-height:26.2px;color:#1f2533;letter-spacing:1.018px;">System</div>
<div class="t" style="left:2534.6px;top:879.02px;font-size:26.2px;line-height:26.2px;color:#1f2533;letter-spacing:1.46px;">Metric change</div>
<div class="t" style="left:2796.3px;top:879.02px;font-size:26.2px;line-height:26.2px;color:#1f2533;letter-spacing:0.716px;">No</div>
<div class="t" style="left:381px;top:1005.02px;font-size:26.2px;line-height:26.2px;color:#1a69c5;letter-spacing:1.195px;"><span class="u">Logon duration increase</span></div>
<div class="t" style="left:1540.3px;top:1005.02px;font-size:26.2px;line-height:26.2px;color:#1f2533;letter-spacing:1.018px;">System</div>
<div class="t" style="left:2534.6px;top:1005.02px;font-size:26.2px;line-height:26.2px;color:#1f2533;letter-spacing:1.46px;">Metric change</div>
<div class="t" style="left:2796.3px;top:1005.02px;font-size:26.2px;line-height:26.2px;color:#1f2533;letter-spacing:0.716px;">No</div>
<div class="t" style="left:381px;top:1131.02px;font-size:26.2px;line-height:26.2px;color:#1a69c5;letter-spacing:1.244px;"><span class="u">No Usage - License Reclaim Adobe Acrobat</span></div>
<div class="t" style="left:1540.3px;top:1131.02px;font-size:26.2px;line-height:26.2px;color:#1f2533;letter-spacing:1.213px;">Custom</div>
<div class="t" style="left:2534.6px;top:1131.02px;font-size:26.2px;line-height:26.2px;color:#1f2533;letter-spacing:1.327px;">Metric threshold</div>
<div class="t" style="left:2796.3px;top:1131.02px;font-size:26.2px;line-height:26.2px;color:#1f2533;letter-spacing:0.716px;">No</div>
<div class="t" style="left:381px;top:1257.02px;font-size:26.2px;line-height:26.2px;color:#1a69c5;letter-spacing:1.166px;"><span class="u">System crashes increase</span></div>
<div class="t" style="left:1540.3px;top:1257.02px;font-size:26.2px;line-height:26.2px;color:#1f2533;letter-spacing:1.018px;">System</div>
<div class="t" style="left:2534.6px;top:1257.02px;font-size:26.2px;line-height:26.2px;color:#1f2533;letter-spacing:1.46px;">Metric change</div>
<div class="t" style="left:2796.3px;top:1257.02px;font-size:26.2px;line-height:26.2px;color:#1f2533;letter-spacing:0.716px;">No</div>
<div class="t" style="left:381px;top:1383.02px;font-size:26.2px;line-height:26.2px;color:#1a69c5;letter-spacing:1.23px;"><span class="u">Test Logon duration increase</span></div>
<div class="t" style="left:1540.3px;top:1383.02px;font-size:26.2px;line-height:26.2px;color:#1f2533;letter-spacing:1.018px;">System</div>
<div class="t" style="left:2534.6px;top:1383.02px;font-size:26.2px;line-height:26.2px;color:#1f2533;letter-spacing:1.46px;">Metric change</div>
<div class="t" style="left:2796.3px;top:1383.02px;font-size:26.2px;line-height:26.2px;color:#1f2533;letter-spacing:0.716px;">No</div>
<div class="t" style="left:381px;top:1544.52px;font-size:26.2px;line-height:26.2px;color:#1a69c5;letter-spacing:1.274px;"><span class="u">Web applications - percentage of frustrating transactions per transaction increase</span></div>
<div class="t" style="left:1540.3px;top:1544.52px;font-size:26.2px;line-height:26.2px;color:#1f2533;letter-spacing:1.183px;">Installed from library</div>
<div class="t" style="left:2534.6px;top:1544.52px;font-size:26.2px;line-height:26.2px;color:#1f2533;letter-spacing:1.46px;">Metric change</div>
<div class="t" style="left:2796.3px;top:1544.52px;font-size:26.2px;line-height:26.2px;color:#1f2533;letter-spacing:0.716px;">No</div>
<div class="t" style="left:381px;top:1742.52px;font-size:26.2px;line-height:26.2px;color:#1a69c5;letter-spacing:1.276px;"><span class="u">Web applications - percentage of incomplete transactions increase</span></div>
<div class="t" style="left:1540.3px;top:1742.52px;font-size:26.2px;line-height:26.2px;color:#1f2533;letter-spacing:1.183px;">Installed from library</div>
<div class="t" style="left:2534.6px;top:1742.52px;font-size:26.2px;line-height:26.2px;color:#1f2533;letter-spacing:1.46px;">Metric change</div>
<div class="t" style="left:2796.3px;top:1742.52px;font-size:26.2px;line-height:26.2px;color:#1f2533;letter-spacing:0.716px;">No</div>
<div class="t" style="left:1915.3px;top:574.88px;font-size:24px;line-height:24px;color:#1f2533;letter-spacing:1.162px;">Applications</div>
<div class="t" style="left:2153.3px;top:574.88px;font-size:24px;line-height:24px;color:#1f2533;letter-spacing:1.107px;">Library</div>
<div class="t" style="left:2329.1000000000004px;top:574.88px;font-size:24px;line-height:24px;color:#1f2533;letter-spacing:0.993px;">binaries</div>
<div class="t" style="left:1859px;top:635.02px;font-size:26.2px;line-height:26.2px;color:#1a69c5;letter-spacing:0.436px;"><span class="u">See 1 more</span></div>
<div class="t" style="left:1915.3px;top:754.68px;font-size:24px;line-height:24px;color:#1f2533;letter-spacing:1.107px;">Library</div>
<div class="t" style="left:2091.1px;top:754.68px;font-size:24px;line-height:24px;color:#1f2533;letter-spacing:0.993px;">binaries</div>
<div class="t" style="left:2277.9px;top:754.68px;font-size:24px;line-height:24px;color:#1f2533;letter-spacing:1.121px;">cloud insights</div>
<div class="t" style="left:1915.3px;top:880.88px;font-size:24px;line-height:24px;color:#1f2533;letter-spacing:1.107px;">Library</div>
<div class="t" style="left:2091.1px;top:880.88px;font-size:24px;line-height:24px;color:#1f2533;letter-spacing:1.564px;">device-performance</div>
<div class="t" style="left:1915.3px;top:1006.88px;font-size:24px;line-height:24px;color:#1f2533;letter-spacing:1.107px;">Library</div>
<div class="t" style="left:2091.1px;top:1006.88px;font-size:24px;line-height:24px;color:#1f2533;letter-spacing:1.564px;">device-performance</div>
<div class="t" style="left:1915.3px;top:1132.88px;font-size:24px;line-height:24px;color:#1f2533;letter-spacing:1.214px;">license</div>
<div class="t" style="left:1915.3px;top:1258.88px;font-size:24px;line-height:24px;color:#1f2533;letter-spacing:1.107px;">Library</div>
<div class="t" style="left:2091.1px;top:1258.88px;font-size:24px;line-height:24px;color:#1f2533;letter-spacing:1.395px;">device performance</div>
<div class="t" style="left:1915.3px;top:1384.88px;font-size:24px;line-height:24px;color:#1f2533;letter-spacing:1.564px;">device-performance</div>
<div class="t" style="left:1915.3px;top:1510.38px;font-size:24px;line-height:24px;color:#1f2533;letter-spacing:1.162px;">Applications</div>
<div class="t" style="left:2153.3px;top:1510.38px;font-size:24px;line-height:24px;color:#1f2533;letter-spacing:1.168px;">Incomplete transaction</div>
<div class="t" style="left:1915.3px;top:1582.38px;font-size:24px;line-height:24px;color:#1f2533;letter-spacing:1.107px;">Library</div>
<div class="t" style="left:2034.8px;top:1580.62px;font-size:26.2px;line-height:26.2px;color:#1a69c5;letter-spacing:1.069px;"><span class="u">See 2 more</span></div>
<div class="t" style="left:1915.3px;top:1708.38px;font-size:24px;line-height:24px;color:#1f2533;letter-spacing:1.162px;">Applications</div>
<div class="t" style="left:2153.3px;top:1708.38px;font-size:24px;line-height:24px;color:#1f2533;letter-spacing:1.168px;">Incomplete transaction</div>
<div class="t" style="left:1915.3px;top:1780.38px;font-size:24px;line-height:24px;color:#1f2533;letter-spacing:1.107px;">Library</div>
<div class="t" style="left:2034.8px;top:1778.62px;font-size:26.2px;line-height:26.2px;color:#1a69c5;letter-spacing:1.069px;"><span class="u">See 2 more</span></div>
</div></div>
<div style="position:absolute;left:3145px;top:437px;width:13.5px;height:1222.5px;background:#c5c9d4;border-radius:7px"></div>
<div style="position:absolute;left:3094.6px;top:752.1px;width:5.8px;height:5.8px;background:#1f2533;border-radius:50%"></div>
<div style="position:absolute;left:3094.6px;top:762.8000000000001px;width:5.8px;height:5.8px;background:#1f2533;border-radius:50%"></div>
<div style="position:absolute;left:3094.6px;top:773.5px;width:5.8px;height:5.8px;background:#1f2533;border-radius:50%"></div>
<div style="position:absolute;left:2793px;top:807px;width:363px;height:234px;background:#262c38;border-radius:7px;box-shadow:0 6px 22px rgba(20,25,40,.38),0 1px 4px rgba(20,25,40,.25)"></div>
<svg style="position:absolute;left:3077px;top:790px" width="41" height="19" viewBox="0 0 41 19"><path d="M2.500 19L17.800 3.300a3.800 3.800 0 0 1 5.400 0L38.500 19z" fill="#262c38"/></svg>
<div style="position:absolute;left:2793px;top:816px;width:363px;height:54px;background:#494f5e"></div>
<svg style="position:absolute;left:2820px;top:825px" width="36" height="36" viewBox="0 0 36 36" fill="none" stroke="#fff" stroke-width="2.2" stroke-linecap="round" stroke-linejoin="round" ><path d="M7.600 3.100H16a2.500 2.500 0 0 1 1.800.700L33.400 17.700"/><path d="M5.100 7.500h9.100a2.500 2.500 0 0 1 1.800.700L29.300 21.200 22 26.200l-3.200 6.900L3.300 17.600a2.500 2.500 0 0 1-.7-1.800V10a2.500 2.500 0 0 1 2.500-2.500z" fill="#494f5e"/><circle cx="9.300" cy="13.500" r="1.100" fill="#fff" stroke-width="1"/></svg>
<svg style="position:absolute;left:2823px;top:882px" width="30" height="30" viewBox="0 0 24 24" fill="none" stroke="#fff" stroke-width="1.8" stroke-linecap="round" stroke-linejoin="round" ><circle cx="19" cy="4.500" r="3.200"/><circle cx="19" cy="19.500" r="3.200"/><circle cx="4.800" cy="12" r="3.200"/><path d="M7.600 10.500l8.600-4.500M7.600 13.500l8.600 4.500"/></svg>
<svg style="position:absolute;left:2819.9px;top:933.1px" width="36" height="36" viewBox="0 0 36 36" fill="none" stroke="#fff" stroke-width="2.2" stroke-linecap="round" stroke-linejoin="round" ><circle cx="18" cy="18" r="4.700"/><path d="M18.00 3.00 L18.52 3.01 L19.05 3.04 L19.57 3.08 L20.09 3.15 L20.60 3.23 L21.04 3.69 L21.34 4.61 L21.53 5.70 L21.70 6.61 L21.97 7.09 L22.35 7.24 L22.72 7.40 L23.09 7.57 L23.45 7.76 L23.80 7.95 L24.15 8.16 L24.49 8.38 L24.82 8.62 L25.14 8.86 L25.46 9.11 L26.01 9.10 L26.89 8.79 L27.93 8.41 L28.87 8.21 L29.49 8.36 L29.82 8.77 L30.14 9.18 L30.44 9.61 L30.72 10.05 L30.99 10.50 L31.24 10.96 L31.48 11.42 L31.70 11.90 L31.91 12.38 L32.09 12.87 L31.91 13.48 L31.27 14.20 L30.42 14.90 L29.71 15.51 L29.43 15.98 L29.49 16.39 L29.54 16.79 L29.57 17.19 L29.59 17.60 L29.60 18.00 L29.59 18.40 L29.57 18.81 L29.54 19.21 L29.49 19.61 L29.43 20.02 L29.71 20.49 L30.42 21.10 L31.27 21.80 L31.91 22.52 L32.09 23.13 L31.91 23.62 L31.70 24.10 L31.48 24.58 L31.24 25.04 L30.99 25.50 L30.72 25.95 L30.44 26.39 L30.14 26.82 L29.82 27.23 L29.49 27.64 L28.87 27.79 L27.93 27.59 L26.89 27.21 L26.01 26.90 L25.46 26.89 L25.14 27.14 L24.82 27.38 L24.49 27.62 L24.15 27.84 L23.80 28.05 L23.45 28.24 L23.09 28.43 L22.72 28.60 L22.35 28.76 L21.97 28.91 L21.70 29.39 L21.53 30.30 L21.34 31.39 L21.04 32.31 L20.60 32.77 L20.09 32.85 L19.57 32.92 L19.05 32.96 L18.52 32.99 L18.00 33.00 L17.48 32.99 L16.95 32.96 L16.43 32.92 L15.91 32.85 L15.40 32.77 L14.96 32.31 L14.66 31.39 L14.47 30.30 L14.30 29.39 L14.03 28.91 L13.65 28.76 L13.28 28.60 L12.91 28.43 L12.55 28.24 L12.20 28.05 L11.85 27.84 L11.51 27.62 L11.18 27.38 L10.86 27.14 L10.54 26.89 L9.99 26.90 L9.11 27.21 L8.07 27.59 L7.13 27.79 L6.51 27.64 L6.18 27.23 L5.86 26.82 L5.56 26.39 L5.28 25.95 L5.01 25.50 L4.76 25.04 L4.52 24.58 L4.30 24.10 L4.09 23.62 L3.91 23.13 L4.09 22.52 L4.73 21.80 L5.58 21.10 L6.29 20.49 L6.57 20.02 L6.51 19.61 L6.46 19.21 L6.43 18.81 L6.41 18.40 L6.40 18.00 L6.41 17.60 L6.43 17.19 L6.46 16.79 L6.51 16.39 L6.57 15.98 L6.29 15.51 L5.58 14.90 L4.73 14.20 L4.09 13.48 L3.91 12.87 L4.09 12.38 L4.30 11.90 L4.52 11.42 L4.76 10.96 L5.01 10.50 L5.28 10.05 L5.56 9.61 L5.86 9.18 L6.18 8.77 L6.51 8.36 L7.13 8.21 L8.07 8.41 L9.11 8.79 L9.99 9.10 L10.54 9.11 L10.86 8.86 L11.18 8.62 L11.51 8.38 L11.85 8.16 L12.20 7.95 L12.55 7.76 L12.91 7.57 L13.28 7.40 L13.65 7.24 L14.03 7.09 L14.30 6.61 L14.47 5.70 L14.66 4.61 L14.96 3.69 L15.40 3.23 L15.91 3.15 L16.43 3.08 L16.95 3.04 L17.48 3.01z"/></svg>
<svg style="position:absolute;left:2824.5px;top:988.8px" width="27" height="32" viewBox="0 0 27 32" fill="none" stroke="#fff" stroke-width="2.3" stroke-linecap="round" stroke-linejoin="round" ><path d="M9 11H3.500a1.500 1.500 0 0 0-1.500 1.500V28.500A1.500 1.500 0 0 0 3.500 30h20A1.500 1.500 0 0 0 25 28.500V12.500A1.500 1.500 0 0 0 23.500 11H18"/><path d="M13.500 21V2M8.500 7l5-5 5 5"/></svg>
<div style="position:absolute;left:3258.500px;top:278px;width:600px;height:1700px;background:#fff;border:2px solid #e3e6f1;border-radius:9px 0 0 0"></div>
<div style="position:absolute;left:3754px;top:280px;width:2px;height:1622px;background:#e3e6f1"></div>
<div style="position:absolute;left:3421.5px;top:360.5px;width:278px;height:2px;background:#e3e6f1"></div>
<div style="position:absolute;left:3315px;top:415px;width:389.5px;height:53.5px;border:2px solid #52648a;border-radius:8px;background:#fff"></div>
<svg style="position:absolute;left:3336.1000000000004px;top:427.90000000000003px" width="43.4" height="43.4" viewBox="0 0 43.4 43.4" fill="none" stroke="#4e5d7e" stroke-width="2.2" stroke-linecap="round"><circle cx="13.7" cy="13.7" r="9.7"/><path d="M21.05887 21.05887L28.55887 28.55887"/></svg>
<svg style="position:absolute;left:3326px;top:503px" width="30" height="23" viewBox="0 0 30 23"><path d="M3 1.3H20.3a2 2 0 0 1 1.7.9L28.4 10.4a1.8 1.8 0 0 1 0 2L22 20.6a2 2 0 0 1-1.7.9H3A1.8 1.8 0 0 1 1.2 19.7V3.1A1.8 1.8 0 0 1 3 1.3Z" fill="#fff" stroke="#d9dcee" stroke-width="2"/></svg>
<div class="t" style="left:2865.8px;top:832.48px;font-size:24px;line-height:24px;color:#fff;letter-spacing:0.851px;-webkit-text-stroke:.5px #fff;">Edit tags</div>
<div class="t" style="left:2865.8px;top:886.28px;font-size:24px;line-height:24px;color:#fff;letter-spacing:0.588px;-webkit-text-stroke:.5px #fff;">Share</div>
<div class="t" style="left:2865.8px;top:940.08px;font-size:24px;line-height:24px;color:#fff;letter-spacing:1.28px;-webkit-text-stroke:.5px #fff;">Configure</div>
<div class="t" style="left:2865.8px;top:994.08px;font-size:24px;line-height:24px;color:#fff;letter-spacing:1.069px;-webkit-text-stroke:.5px #fff;">Export for library (dev)</div>
<div class="t" style="left:3316px;top:344.37px;font-size:35px;line-height:35px;color:#1f2430;letter-spacing:1.354px;-webkit-text-stroke:1.57px #1f2430;">Tags</div>
<div class="t" style="left:3389px;top:430.04px;font-size:27px;line-height:27px;color:#5a668a;letter-spacing:0.552px;font-style:italic;">Search for tags...</div>
<div class="t" style="left:3371.5px;top:503.26px;font-size:24.5px;line-height:24.5px;color:#1f2533;letter-spacing:1.033px;">Untagged</div>
<div style="position:absolute;left:3300px;top:562px;width:440px;height:1288px;overflow:hidden"><div style="position:absolute;left:-3300px;top:-562px;width:3831px;height:1902px">
<svg style="position:absolute;left:3326px;top:550.8px" width="30" height="23" viewBox="0 0 30 23"><path d="M3 1.3H20.3a2 2 0 0 1 1.7.9L28.4 10.4a1.8 1.8 0 0 1 0 2L22 20.6a2 2 0 0 1-1.7.9H3A1.8 1.8 0 0 1 1.2 19.7V3.1A1.8 1.8 0 0 1 3 1.3Z" fill="#fff" stroke="#d9dcee" stroke-width="2"/></svg>
<svg style="position:absolute;left:3326px;top:631.8px" width="30" height="23" viewBox="0 0 30 23"><path d="M3 1.3H20.3a2 2 0 0 1 1.7.9L28.4 10.4a1.8 1.8 0 0 1 0 2L22 20.6a2 2 0 0 1-1.7.9H3A1.8 1.8 0 0 1 1.2 19.7V3.1A1.8 1.8 0 0 1 3 1.3Z" fill="#fff" stroke="#d9dcee" stroke-width="2"/></svg>
<svg style="position:absolute;left:3326px;top:712.8px" width="30" height="23" viewBox="0 0 30 23"><path d="M3 1.3H20.3a2 2 0 0 1 1.7.9L28.4 10.4a1.8 1.8 0 0 1 0 2L22 20.6a2 2 0 0 1-1.7.9H3A1.8 1.8 0 0 1 1.2 19.7V3.1A1.8 1.8 0 0 1 3 1.3Z" fill="#fff" stroke="#d9dcee" stroke-width="2"/></svg>
<div class="chip" style="left:3314.600px;top:778.0px;width:316.7px;height:54px"></div>
<svg style="position:absolute;left:3326px;top:793.8px" width="30" height="23" viewBox="0 0 30 23"><path d="M2.5 0.3H20.6a2.4 2.4 0 0 1 2 1L29.3 10.3a2 2 0 0 1 0 2.2L22.6 21.5a2.4 2.4 0 0 1-2 1H2.5A2.2 2.2 0 0 1 .3 20.3V2.5A2.2 2.2 0 0 1 2.5.3Z" fill="#fdc860"/></svg>
<svg style="position:absolute;left:3326px;top:874.8px" width="30" height="23" viewBox="0 0 30 23"><path d="M3 1.3H20.3a2 2 0 0 1 1.7.9L28.4 10.4a1.8 1.8 0 0 1 0 2L22 20.6a2 2 0 0 1-1.7.9H3A1.8 1.8 0 0 1 1.2 19.7V3.1A1.8 1.8 0 0 1 3 1.3Z" fill="#fff" stroke="#d9dcee" stroke-width="2"/></svg>
<svg style="position:absolute;left:3326px;top:955.8px" width="30" height="23" viewBox="0 0 30 23"><path d="M3 1.3H20.3a2 2 0 0 1 1.7.9L28.4 10.4a1.8 1.8 0 0 1 0 2L22 20.6a2 2 0 0 1-1.7.9H3A1.8 1.8 0 0 1 1.2 19.7V3.1A1.8 1.8 0 0 1 3 1.3Z" fill="#fff" stroke="#d9dcee" stroke-width="2"/></svg>
<svg style="position:absolute;left:3326px;top:1036.8px" width="30" height="23" viewBox="0 0 30 23"><path d="M3 1.3H20.3a2 2 0 0 1 1.7.9L28.4 10.4a1.8 1.8 0 0 1 0 2L22 20.6a2 2 0 0 1-1.7.9H3A1.8 1.8 0 0 1 1.2 19.7V3.1A1.8 1.8 0 0 1 3 1.3Z" fill="#fff" stroke="#d9dcee" stroke-width="2"/></svg>
<svg style="position:absolute;left:3326px;top:1117.8px" width="30" height="23" viewBox="0 0 30 23"><path d="M3 1.3H20.3a2 2 0 0 1 1.7.9L28.4 10.4a1.8 1.8 0 0 1 0 2L22 20.6a2 2 0 0 1-1.7.9H3A1.8 1.8 0 0 1 1.2 19.7V3.1A1.8 1.8 0 0 1 3 1.3Z" fill="#fff" stroke="#d9dcee" stroke-width="2"/></svg>
<svg style="position:absolute;left:3326px;top:1198.8px" width="30" height="23" viewBox="0 0 30 23"><path d="M2.5 0.3H20.6a2.4 2.4 0 0 1 2 1L29.3 10.3a2 2 0 0 1 0 2.2L22.6 21.5a2.4 2.4 0 0 1-2 1H2.5A2.2 2.2 0 0 1 .3 20.3V2.5A2.2 2.2 0 0 1 2.5.3Z" fill="#fdc860"/></svg>
<svg style="position:absolute;left:3326px;top:1279.8px" width="30" height="23" viewBox="0 0 30 23"><path d="M3 1.3H20.3a2 2 0 0 1 1.7.9L28.4 10.4a1.8 1.8 0 0 1 0 2L22 20.6a2 2 0 0 1-1.7.9H3A1.8 1.8 0 0 1 1.2 19.7V3.1A1.8 1.8 0 0 1 3 1.3Z" fill="#fff" stroke="#d9dcee" stroke-width="2"/></svg>
<div class="chip" style="left:3314.600px;top:1345.0px;width:158.7px;height:54px"></div>
<svg style="position:absolute;left:3326px;top:1360.8px" width="30" height="23" viewBox="0 0 30 23"><path d="M2.5 0.3H20.6a2.4 2.4 0 0 1 2 1L29.3 10.3a2 2 0 0 1 0 2.2L22.6 21.5a2.4 2.4 0 0 1-2 1H2.5A2.2 2.2 0 0 1 .3 20.3V2.5A2.2 2.2 0 0 1 2.5.3Z" fill="#77c39a"/></svg>
<div class="chip" style="left:3314.600px;top:1426.0px;width:159.7px;height:54px"></div>
<svg style="position:absolute;left:3326px;top:1441.8px" width="30" height="23" viewBox="0 0 30 23"><path d="M2.5 0.3H20.6a2.4 2.4 0 0 1 2 1L29.3 10.3a2 2 0 0 1 0 2.2L22.6 21.5a2.4 2.4 0 0 1-2 1H2.5A2.2 2.2 0 0 1 .3 20.3V2.5A2.2 2.2 0 0 1 2.5.3Z" fill="#d4b3f1"/></svg>
<svg style="position:absolute;left:3326px;top:1522.8px" width="30" height="23" viewBox="0 0 30 23"><path d="M2.5 0.3H20.6a2.4 2.4 0 0 1 2 1L29.3 10.3a2 2 0 0 1 0 2.2L22.6 21.5a2.4 2.4 0 0 1-2 1H2.5A2.2 2.2 0 0 1 .3 20.3V2.5A2.2 2.2 0 0 1 2.5.3Z" fill="#77c39a"/></svg>
<svg style="position:absolute;left:3326px;top:1603.8px" width="30" height="23" viewBox="0 0 30 23"><path d="M2.5 0.3H20.6a2.4 2.4 0 0 1 2 1L29.3 10.3a2 2 0 0 1 0 2.2L22.6 21.5a2.4 2.4 0 0 1-2 1H2.5A2.2 2.2 0 0 1 .3 20.3V2.5A2.2 2.2 0 0 1 2.5.3Z" fill="#fdc860"/></svg>
<svg style="position:absolute;left:3326px;top:1684.8px" width="30" height="23" viewBox="0 0 30 23"><path d="M2.5 0.3H20.6a2.4 2.4 0 0 1 2 1L29.3 10.3a2 2 0 0 1 0 2.2L22.6 21.5a2.4 2.4 0 0 1-2 1H2.5A2.2 2.2 0 0 1 .3 20.3V2.5A2.2 2.2 0 0 1 2.5.3Z" fill="#d4b3f1"/></svg>
<svg style="position:absolute;left:3326px;top:1765.8px" width="30" height="23" viewBox="0 0 30 23"><path d="M3 1.3H20.3a2 2 0 0 1 1.7.9L28.4 10.4a1.8 1.8 0 0 1 0 2L22 20.6a2 2 0 0 1-1.7.9H3A1.8 1.8 0 0 1 1.2 19.7V3.1A1.8 1.8 0 0 1 3 1.3Z" fill="#fff" stroke="#d9dcee" stroke-width="2"/></svg>
<svg style="position:absolute;left:3326px;top:1846.8px" width="30" height="23" viewBox="0 0 30 23"><path d="M3 1.3H20.3a2 2 0 0 1 1.7.9L28.4 10.4a1.8 1.8 0 0 1 0 2L22 20.6a2 2 0 0 1-1.7.9H3A1.8 1.8 0 0 1 1.2 19.7V3.1A1.8 1.8 0 0 1 3 1.3Z" fill="#fff" stroke="#d9dcee" stroke-width="2"/></svg>
<div class="t" style="left:3371.5px;top:550.96px;font-size:24.5px;line-height:24.5px;color:#1f2533;letter-spacing:0.834px;">device</div>
<div class="t" style="left:3371.5px;top:631.96px;font-size:24.5px;line-height:24.5px;color:#1f2533;letter-spacing:1.078px;">device performance</div>
<div class="t" style="left:3371.5px;top:712.96px;font-size:24.5px;line-height:24.5px;color:#1f2533;letter-spacing:0.828px;">Device ratings</div>
<div class="t" style="left:3371.5px;top:793.96px;font-size:24.5px;line-height:24.5px;color:#1f2533;letter-spacing:1.322px;">device-performance</div>
<div class="t" style="left:3371.5px;top:874.96px;font-size:24.5px;line-height:24.5px;color:#1f2533;letter-spacing:0.559px;">Errors</div>
<div class="t" style="left:3371.5px;top:955.96px;font-size:24.5px;line-height:24.5px;color:#1f2533;letter-spacing:0.751px;">exection_freeze</div>
<div class="t" style="left:3371.5px;top:1036.96px;font-size:24.5px;line-height:24.5px;color:#1f2533;letter-spacing:0.907px;">execution crashes</div>
<div class="t" style="left:3371.5px;top:1117.96px;font-size:24.5px;line-height:24.5px;color:#1f2533;letter-spacing:1.026px;">freezes</div>
<div class="t" style="left:3371.5px;top:1198.96px;font-size:24.5px;line-height:24.5px;color:#1f2533;letter-spacing:0.952px;">Incomplete transaction</div>
<div class="t" style="left:3371.5px;top:1279.96px;font-size:24.5px;line-height:24.5px;color:#1f2533;letter-spacing:0.92px;">issue query</div>
<div class="t" style="left:3371.5px;top:1360.96px;font-size:24.5px;line-height:24.5px;color:#1f2533;letter-spacing:1.018px;">Library</div>
<div class="t" style="left:3371.5px;top:1441.96px;font-size:24.5px;line-height:24.5px;color:#1f2533;letter-spacing:0.956px;">license</div>
<div class="t" style="left:3371.5px;top:1522.96px;font-size:24.5px;line-height:24.5px;color:#1f2533;letter-spacing:0.887px;">Login</div>
<div class="t" style="left:3371.5px;top:1603.96px;font-size:24.5px;line-height:24.5px;color:#1f2533;letter-spacing:1.011px;">meetings</div>
<div class="t" style="left:3371.5px;top:1684.96px;font-size:24.5px;line-height:24.5px;color:#1f2533;letter-spacing:0.939px;">new propsal</div>
<div class="t" style="left:3371.5px;top:1765.96px;font-size:24.5px;line-height:24.5px;color:#1f2533;letter-spacing:1.089px;">Newtesting</div>
<div class="t" style="left:3371.5px;top:1846.96px;font-size:24.5px;line-height:24.5px;color:#1f2533;letter-spacing:0.558px;">no tag test</div>
</div></div>
<div style="position:absolute;left:3315px;top:568px;width:390px;height:2px;background:#dfe2ef"></div>
<div style="position:absolute;left:3464.8px;top:1848.3px;width:2.6px;height:1.7px;background:#2a2f3c;border-radius:1px"></div>
<div style="position:absolute;left:3687px;top:881px;width:14px;height:452px;background:#c5c9d4;border-radius:7px"></div>
<svg style="position:absolute;left:3786px;top:306px" width="22" height="30" viewBox="0 0 22 30" fill="none" stroke="#4e5d7e" stroke-width="3.200"><path d="M5 3.500l11.800 11.300L5 26.200"/></svg>
<div style="position:absolute;left:3766.2px;top:378.9px;width:62.8px;height:62.8px;border-radius:50%;background:#5fa8ec"></div>
<svg style="position:absolute;left:3778.8px;top:391.9px" width="36" height="36" viewBox="0 0 36 36" fill="none" stroke="#fff" stroke-width="2.2" stroke-linecap="round" stroke-linejoin="round" ><path d="M7.600 3.100H16a2.500 2.500 0 0 1 1.800.700L33.400 17.700"/><path d="M5.100 7.500h9.100a2.500 2.500 0 0 1 1.800.700L29.300 21.200 22 26.200l-3.200 6.900L3.300 17.600a2.500 2.500 0 0 1-.7-1.800V10a2.500 2.500 0 0 1 2.500-2.500z" fill="#5fa8ec"/><circle cx="9.300" cy="13.500" r="1.100" fill="#fff" stroke-width="1"/></svg>
<svg style="position:absolute;left:3780px;top:492.7px" width="34" height="34" viewBox="0 0 34 34" fill="none" stroke="#4e5d7e" stroke-width="2.4" stroke-linecap="round" stroke-linejoin="round" ><circle cx="17" cy="17" r="14.500"/><path d="M12.500 13.500a4.500 4.500 0 1 1 6.600 4c-1.400.8-2.100 1.600-2.100 3.300"/><circle cx="17" cy="25" r="1" fill="#4e5d7e"/></svg>
<div style="position:absolute;left:3690.500px;top:1848px;width:150px;height:60px;background:#262c38;border:2.500px solid #3d4452;border-radius:6px 0 0 0"></div>
<svg style="position:absolute;left:3710.4px;top:1861.5px" width="32" height="32" viewBox="0 0 32 32" fill="none" stroke="#fff" stroke-width="2.5" stroke-linecap="round" stroke-linejoin="round" ><circle cx="16" cy="16" r="14"/><circle cx="16" cy="16" r="6.800"/><path d="M23.28 20.31L26.39 23.42M20.31 23.28L23.42 26.39M11.69 23.28L8.58 26.39M8.72 20.31L5.61 23.42M8.72 11.69L5.61 8.58M11.69 8.72L8.58 5.61M20.31 8.72L23.42 5.61M23.28 11.69L26.39 8.58"/></svg>
<div style="position:absolute;left:3643.2px;top:1811.8px;width:68px;height:67px;border-radius:50%;background:#0668c8;border:3px solid #2a7fd4"></div>
<div class="t" style="left:3752.6px;top:1862.30px;font-size:28px;line-height:28px;color:#fff;letter-spacing:-1.062px;font-weight:700;">Help</div>
<div class="t" style="left:3668px;top:1829.54px;font-size:31.5px;line-height:31.5px;color:#fff;letter-spacing:0px;-webkit-text-stroke:.3px #fff;">2</div>
</body></html>
